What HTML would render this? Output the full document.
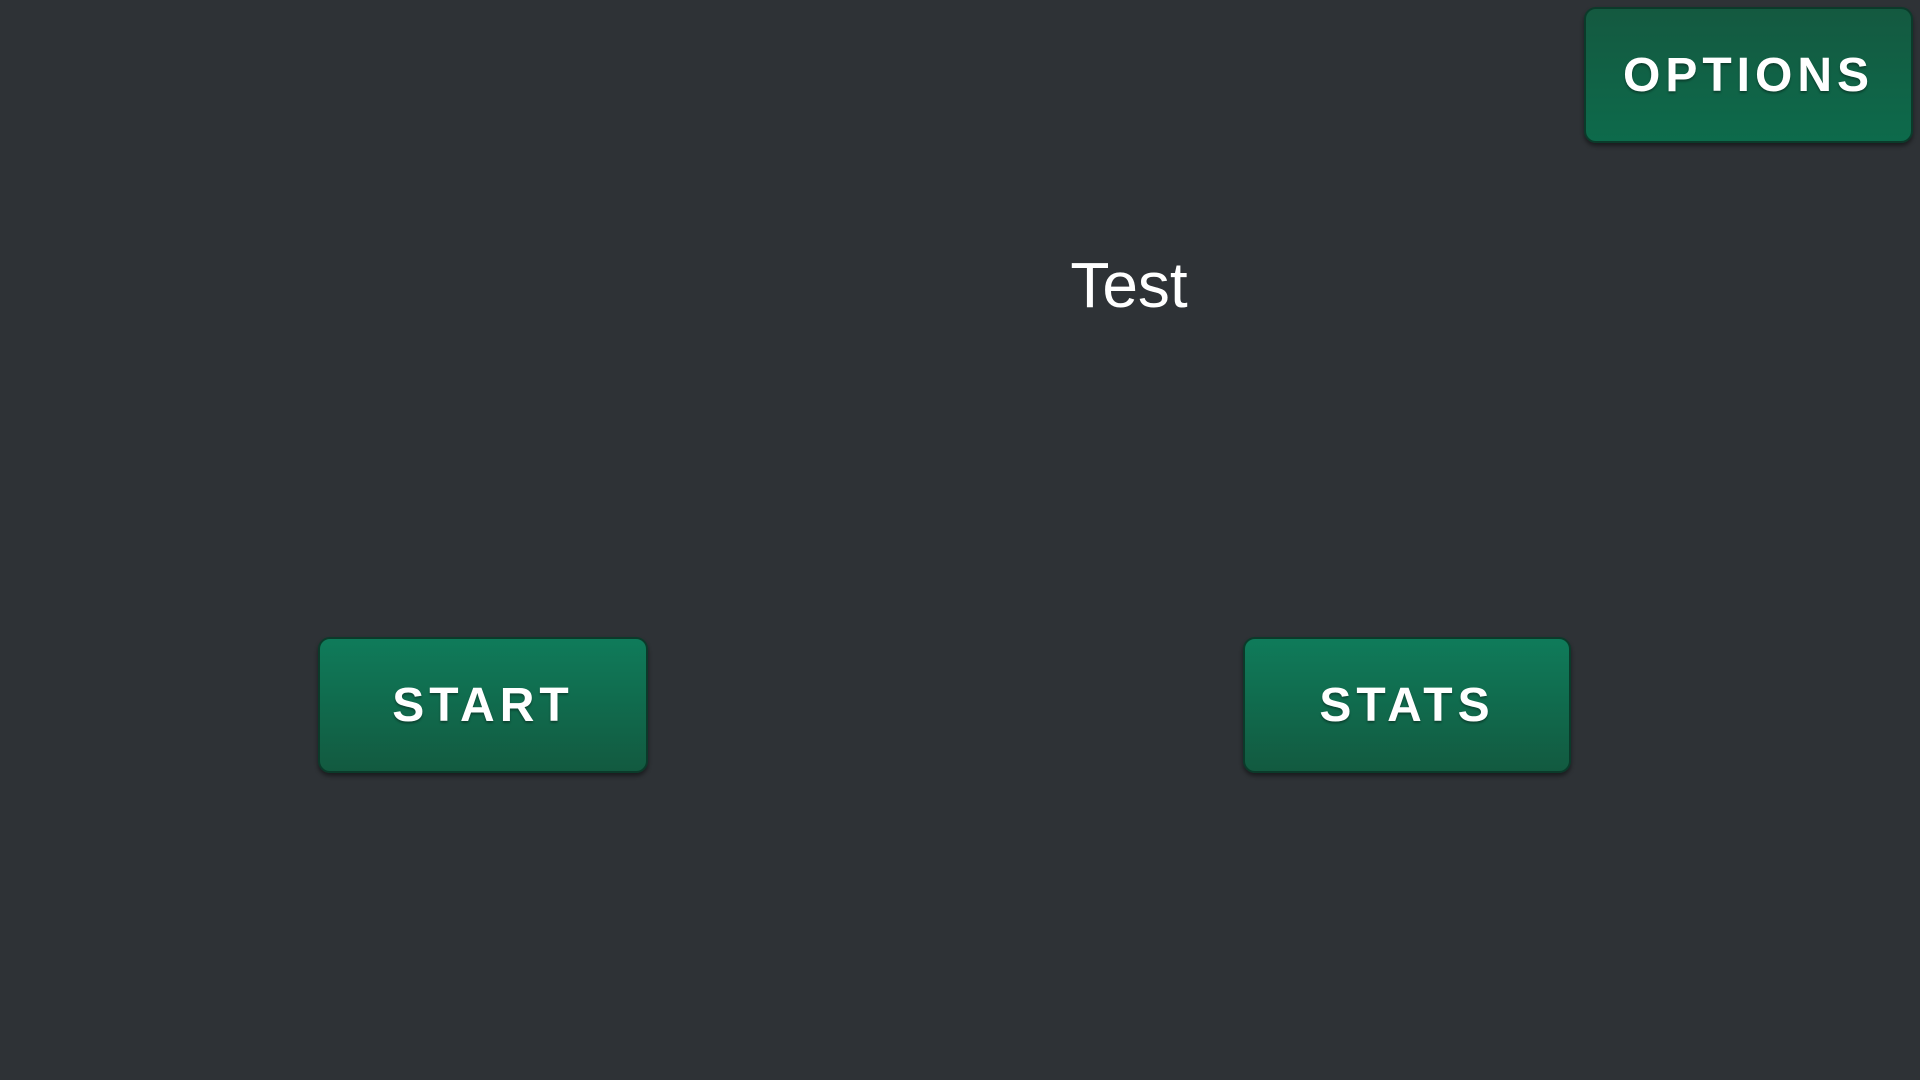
<!DOCTYPE html>
<html><head><style>
html,body{margin:0;padding:0;width:1920px;height:1080px;overflow:hidden;background:#2e3236;font-family:"Liberation Sans",sans-serif;}
.btn{position:absolute;border-radius:12px;box-sizing:border-box;border:2px solid #0b3a2a;box-shadow:0 3px 4px rgba(0,0,0,.45);color:#fff;font-weight:bold;font-size:48px;letter-spacing:5px;display:flex;align-items:center;justify-content:center;text-shadow:0 2px 2px rgba(0,0,0,.35);}
.g{background:linear-gradient(#0f7b5a,#125a40);}
.o{background:linear-gradient(#145940,#0d6a4b);}
</style></head><body>
<div class="btn o" style="left:1584px;top:7px;width:329px;height:136px;">OPTIONS</div>
<div style="position:absolute;left:0;width:2258px;top:248px;text-align:center;color:#fff;font-size:64px;">Test</div>
<div class="btn g" style="left:318px;top:637px;width:330px;height:136px;">START</div>
<div class="btn g" style="left:1243px;top:637px;width:328px;height:136px;">STATS</div>
</body></html>
